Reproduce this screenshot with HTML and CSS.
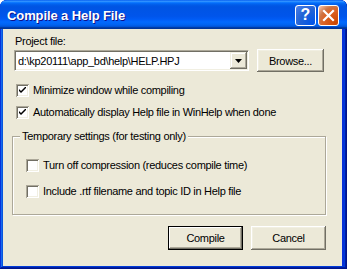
FILE: index.html
```html
<!DOCTYPE html>
<html>
<head>
    <title>Compile a Help File</title>
    <link rel="stylesheet" href="styles.css">
</head>
<body>
    <div class="window">
        <!-- Title bar -->
        <div class="titlebar">
            <span class="title">Compile a Help File</span>
            <div class="caption-buttons">
                <div class="cap-btn help">?</div>
                <div class="cap-btn close">
                    <svg width="13" height="13" viewBox="0 0 13 13">
                        <path d="M2 2 L11 11 M11 2 L2 11" stroke="#fff" stroke-width="2.2" stroke-linecap="square"/>
                    </svg>
                </div>
            </div>
        </div>

        <div class="client">
            <!-- Project file -->
            <div class="field-label">Project file:</div>
            <div class="file-row">
                <div class="combo">
                    <span class="combo-text">d:\kp20111\app_bd\help\HELP.HPJ</span>
                    <span class="combo-btn">
                        <svg width="7" height="4" viewBox="0 0 7 4"><path d="M0 0 H7 L3.5 4 Z" fill="#000"/></svg>
                    </span>
                </div>
                <button class="btn browse">Browse...</button>
            </div>

            <div class="check-row first">
                <span class="check"><svg width="7" height="7" viewBox="0 0 7 7"><path d="M0 2 L0 4 L2 6 L7 1 L7 -1 L2 4 Z" fill="#000"/></svg></span>
                <span>Minimize window while compiling</span>
            </div>
            <div class="check-row">
                <span class="check"><svg width="7" height="7" viewBox="0 0 7 7"><path d="M0 2 L0 4 L2 6 L7 1 L7 -1 L2 4 Z" fill="#000"/></svg></span>
                <span>Automatically display Help file in WinHelp when done</span>
            </div>

            <!-- Temporary settings -->
            <fieldset class="group">
                <legend>Temporary settings (for testing only)</legend>
                <div class="check-row inner">
                    <span class="check"></span>
                    <span>Turn off compression (reduces compile time)</span>
                </div>
                <div class="check-row inner">
                    <span class="check"></span>
                    <span>Include .rtf filename and topic ID in Help file</span>
                </div>
            </fieldset>

            <div class="actions">
                <button class="btn default">Compile</button>
                <button class="btn">Cancel</button>
            </div>
        </div>
    </div>
</body>
</html>
```

FILE: styles.css
```css
html, body { margin: 0; padding: 0; background: #fff; }
body { font-family: "Liberation Sans", Arial, sans-serif; font-size: 11px; letter-spacing: -0.3px; color: #000; }

.window {
    width: 347px; height: 269px; box-sizing: border-box;
    display: flex; flex-direction: column;
    background: #0831d9;
    padding: 0 5px 3px 3px;
    border-radius: 7px 7px 0 0;
    box-shadow: inset -1px -1px #00138c, inset 1px 1px #0831d9, inset -2px -2px #001ea0, inset 2px 2px #166aee, inset -3px -3px #003bda, inset 3px 3px #0855dd;
}

.titlebar {
    height: 29px; margin: 0 -5px 0 -3px; padding: 0 7px 0 7px;
    display: flex; align-items: center; justify-content: space-between;
    border-radius: 7px 7px 0 0;
    background: linear-gradient(to bottom, #0058ee 0%, #3593ff 4%, #288eff 6%, #127dff 8%, #036ffc 10%, #0262ee 14%, #0057e5 20%, #0054e3 24%, #0055eb 56%, #005bf5 66%, #026afe 76%, #0062ef 86%, #0052d6 92%, #0040ab 94%, #003092 100%);
}
.title { color: #fff; font-weight: bold; font-size: 13px; letter-spacing: -0.1px; text-shadow: 1px 1px #0f1089; margin-top: 1px; }
.caption-buttons { display: flex; gap: 2px; margin-right: 1px; margin-top: 1px; }
.cap-btn {
    width: 21px; height: 21px; box-sizing: border-box; border: 1px solid #fff; border-radius: 3px;
    display: flex; align-items: center; justify-content: center;
    color: #fff; font-weight: bold; font-size: 16px; letter-spacing: 0;
}
.cap-btn.help { background: radial-gradient(circle at 90% 90%, #0054e9 0%, #2263d5 55%, #4479e4 90%, #a3bbec 100%); }
.cap-btn.close { background: radial-gradient(circle at 90% 90%, #cc4600 0%, #dc6527 55%, #cd7546 70%, #ffccb2 100%); }

.client { flex: 1; background: #ece9d8; padding: 6px 0 0 9px; }

.field-label { line-height: 13px; margin-left: 3px; }

.file-row { display: flex; align-items: center; margin-top: 1px; }
.combo {
    width: 235px; height: 21px; box-sizing: border-box; margin-left: 2px;
    display: flex; align-items: center; background: #fff;
    border: 1px solid; border-color: #aca899 #fff #fff #aca899;
    box-shadow: inset 1px 1px #716f64, inset -1px -1px #f1efe2;
}
.combo-text { flex: 1; padding-left: 3px; white-space: nowrap; overflow: hidden; }
.combo-btn {
    width: 17px; height: 17px; box-sizing: border-box; margin-right: 1px;
    display: flex; align-items: center; justify-content: center; background: #ece9d8;
    box-shadow: inset -1px -1px #716f64, inset 1px 1px #f1efe2, inset -2px -2px #aca899, inset 2px 2px #fff;
}

.btn {
    font: inherit; letter-spacing: inherit; color: #000; background: #ece9d8; border: none; padding: 0;
    height: 23px; width: 67px;
    box-shadow: inset -1px -1px #716f64, inset 1px 1px #fff, inset -2px -2px #aca899, inset 2px 2px #f1efe2;
}
.browse { margin-left: 8px; }

.check-row { display: flex; align-items: center; gap: 4px; line-height: 13px; margin-left: 4px; }
.check-row.first { margin-top: 12px; }
.check-row + .check-row { margin-top: 9px; }
.check {
    width: 13px; height: 13px; box-sizing: border-box; background: #fff;
    display: flex; align-items: center; justify-content: center;
    box-shadow: inset 1px 1px #aca899, inset -1px -1px #fff, inset 2px 2px #716f64, inset -2px -2px #f1efe2;
}

.group {
    width: 314px; height: 85px; box-sizing: border-box; margin: 11px 0 0 0; padding: 0 0 0 13px;
    border: 1px solid #aca899; box-shadow: inset 1px 1px #fff, 1px 1px #fff;
}
.group legend { padding: 0 2px; margin-left: -6px; line-height: 13px; background: #ece9d8; }
.group .check-row { margin-left: 0; }
.group .check-row:first-of-type { margin-top: 16px; }
.group .check-row + .check-row { margin-top: 13px; }

.actions { display: flex; justify-content: flex-end; gap: 8px; margin: 11px 16px 0 0; }
.actions .btn { width: 75px; height: 24px; }
.btn.default {
    box-shadow: inset 0 0 0 1px #000, inset -2px -2px #716f64, inset 2px 2px #fff, inset -3px -3px #aca899;
}
```
